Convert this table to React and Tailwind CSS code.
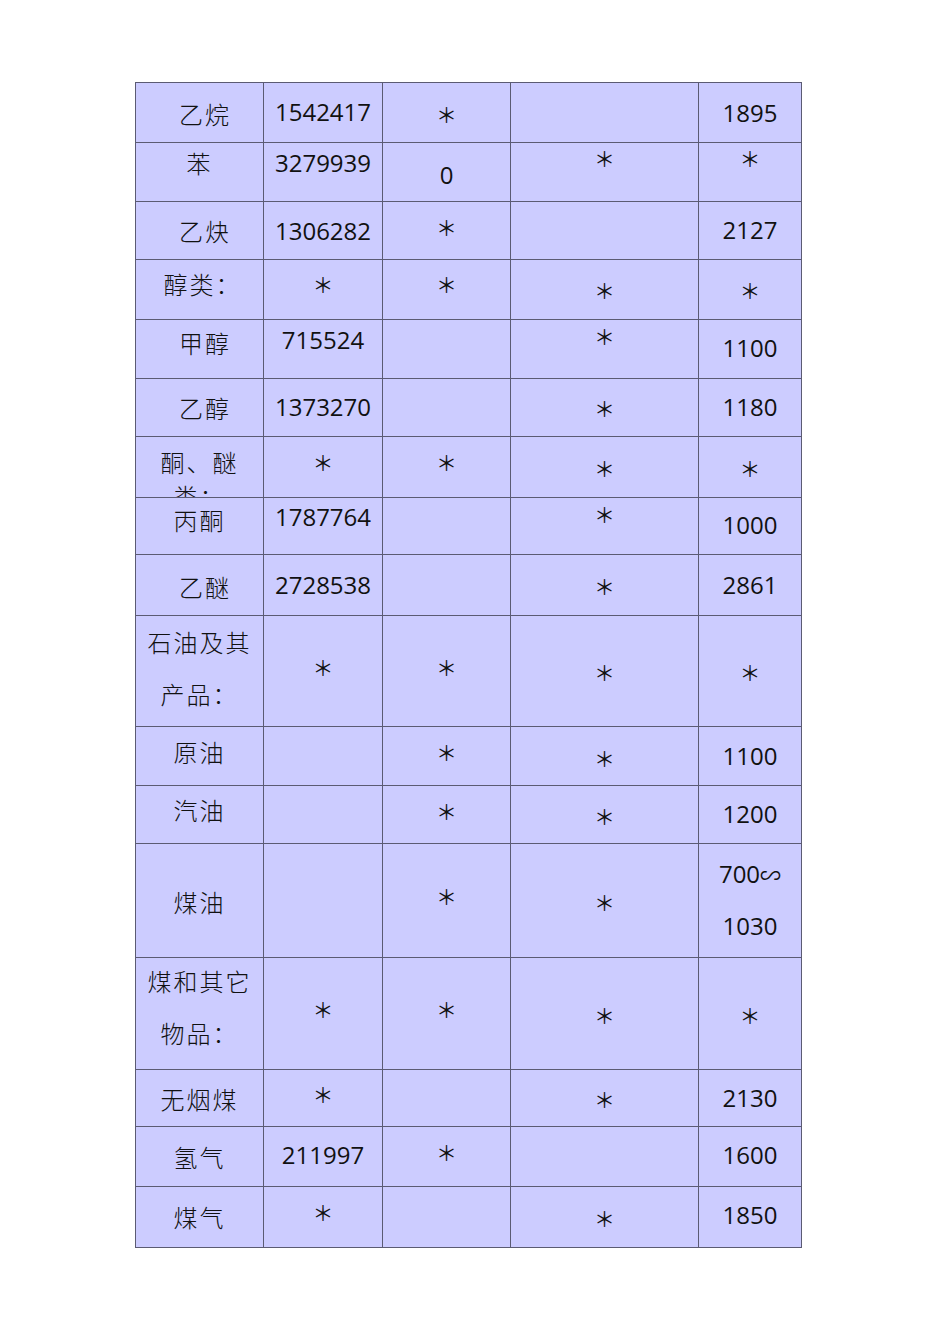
import React from 'react';

const S = '＊';

const rows = [
  [['乙烷', 'pt-[16px] pl-[22px] pr-[11px]'], ['1542417', 'pt-[14px]'], [S, 'pt-[16px]'], ['', ''], ['1895', 'pt-[15px]']],
  [['苯', 'pt-[5px] px-[11px]'], ['3279939', 'pt-[5px]'], ['0', 'pt-[17px]'], [S, 'pt-0'], [S, 'pt-0']],
  [['乙炔', 'pt-[14px] pl-[22px] pr-[11px]'], ['1306282', 'pt-[14px]'], [S, 'pt-[10px]'], ['', ''], ['2127', 'pt-[13px]']],
  [['醇类：', 'pt-[9px] pl-[17px] pr-[11px]'], [S, 'pt-[9px]'], [S, 'pt-[9px]'], [S, 'pt-[15px]'], [S, 'pt-[15px]']],
  [['甲醇', 'pt-[8px] pl-[22px] pr-[11px]'], ['715524', 'pt-[5px]'], ['', ''], [S, 'pt-[1px]'], ['1100', 'pt-[13px]']],
  [['乙醇', 'pt-[14px] pl-[22px] pr-[11px]'], ['1373270', 'pt-[13px]'], ['', ''], [S, 'pt-[14px]'], ['1180', 'pt-[13px]']],
  [['酮、醚类：', 'pt-[8px] px-[11px] leading-[34px]'], [S, 'pt-[10px]'], [S, 'pt-[10px]'], [S, 'pt-[16px]'], [S, 'pt-[16px]']],
  [['丙酮', 'pt-[7px] px-[11px]'], ['1787764', 'pt-[4px]'], ['', ''], [S, 'pt-[1px]'], ['1000', 'pt-[12px]']],
  [['乙醚', 'pt-[17px] pl-[22px] pr-[11px]'], ['2728538', 'pt-[15px]'], ['', ''], [S, 'pt-[16px]'], ['2861', 'pt-[15px]']],
  [['石油及其产品：', 'pt-0 px-[11px] leading-[52px]'], [S, 'pt-[36px]'], [S, 'pt-[36px]'], [S, 'pt-[41px]'], [S, 'pt-[41px]']],
  [['原油', 'pt-[10px] px-[11px]'], ['', ''], [S, 'pt-[10px]'], [S, 'pt-[16px]'], ['1100', 'pt-[14px]']],
  [['汽油', 'pt-[9px] px-[11px]'], ['', ''], [S, 'pt-[10px]'], [S, 'pt-[15px]'], ['1200', 'pt-[13px]']],
  [['煤油', 'pt-[43px] px-[11px]'], ['', ''], [S, 'pt-[37px]'], [S, 'pt-[43px]'], ['700∽\n1030', 'pt-[4px] leading-[52px]']],
  [['煤和其它物品：', 'pt-0 px-[11px] leading-[52px] -mt-[3px]'], [S, 'pt-[36px]'], [S, 'pt-[36px]'], [S, 'pt-[42px]'], [S, 'pt-[42px]']],
  [['无烟煤', 'pt-[14px] px-[11px]'], [S, 'pt-[9px]'], ['', ''], [S, 'pt-[14px]'], ['2130', 'pt-[13px]']],
  [['氢气', 'pt-[15px] px-[11px]'], ['211997', 'pt-[13px]'], [S, 'pt-[10px]'], ['', ''], ['1600', 'pt-[13px]']],
  [['煤气', 'pt-[15px] px-[11px]'], [S, 'pt-[10px]'], ['', ''], [S, 'pt-[16px]'], ['1850', 'pt-[13px]']],
];

function renderText(text) {
  if (text === '700∽\n1030') {
    return (
      <>
        700<span className="text-[21px] font-['Noto_Sans_CJK_SC',sans-serif]">∽</span>
        {'\n'}1030
      </>
    );
  }
  return text;
}

function Cell({ text, cls, first }) {
  const lead = cls.includes('leading-') ? '' : 'leading-[30px]';
  const star = text === S;
  const font = first
    ? "text-[24px] tracking-[2px] font-light font-['Noto_Sans_CJK_SC',sans-serif]"
    : star
    ? "text-[21px] font-['Noto_Sans_CJK_SC',sans-serif]"
    : 'text-[24px]';
  const clip = text === '酮、醚类：' ? 'overflow-hidden' : '';
  return (
    <div className={`border-r border-b border-[#5b5b73] ${clip}`}>
      <div className={`whitespace-pre-line text-center text-[#111] ${font} ${lead} ${cls}`}>
        {renderText(text)}
      </div>
    </div>
  );
}

export default function App() {
  return (
    <div className="min-h-[1344px] w-[950px] bg-white pt-[82px] font-['Open_Sans','Noto_Sans_CJK_SC',sans-serif]">
      <div className="ml-[135px] grid w-[667px] grid-cols-[128px_119px_128px_188px_103px] grid-rows-[60px_59px_58px_60px_59px_58px_61px_57px_61px_111px_59px_58px_114px_112px_57px_60px_61px] border-l border-t border-[#5b5b73] bg-[#ccccff]">
        {rows.map((r, i) =>
          r.map(([t, c], j) => <Cell key={`${i}-${j}`} text={t} cls={c} first={j === 0} />)
        )}
      </div>
    </div>
  );
}
